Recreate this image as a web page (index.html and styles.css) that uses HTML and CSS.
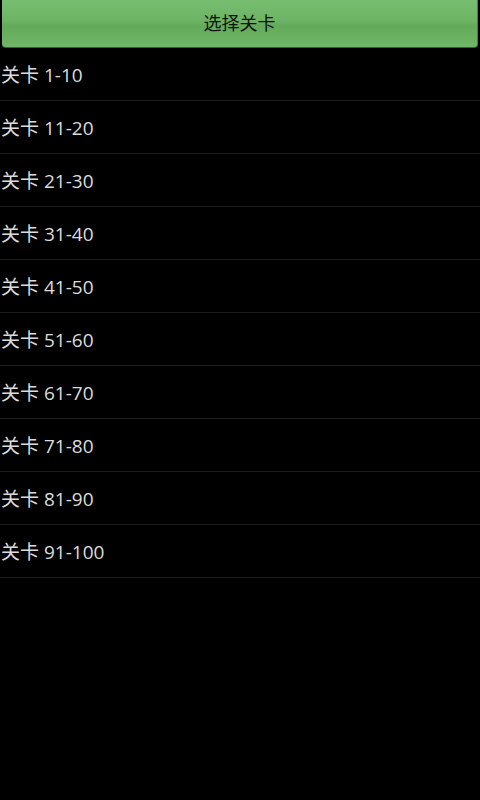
FILE: index.html
```html
<!DOCTYPE html>
<html>
<head>
<meta charset="utf-8">
<link rel="stylesheet" href="styles.css">
</head>
<body>
<div class="header">
  <div class="btn">选择关卡</div>
</div>
<ul class="list">
  <li>关卡 1-10</li>
  <li>关卡 11-20</li>
  <li>关卡 21-30</li>
  <li>关卡 31-40</li>
  <li>关卡 41-50</li>
  <li>关卡 51-60</li>
  <li>关卡 61-70</li>
  <li>关卡 71-80</li>
  <li>关卡 81-90</li>
  <li>关卡 91-100</li>
</ul>
</body>
</html>
```
FILE: styles.css
```css
html, body {
  margin: 0;
  padding: 0;
  background: #000;
  height: 100%;
}
body {
  font-family: "Open Sans", "Noto Sans CJK SC", sans-serif;
}
.header {
  padding: 0 2px;
}
.btn {
  height: 47px;
  line-height: 46px;
  text-align: center;
  font-size: 18px;
  color: #111;
  background: linear-gradient(#77bd70, #6cb464 45%, #63aa5a 55%, #6fb867);
  border-radius: 0 0 4px 4px;
  border-right: 1px solid #4a7a45;
  border-bottom: 1px solid #3c5c39;
}
.list {
  list-style: none;
  margin: 0;
  padding: 0;
}
.list li {
  height: 52px;
  line-height: 54px;
  padding-left: 1px;
  font-size: 19px;
  color: #dcdcdc;
  border-bottom: 1px solid #1c1c1c;
}
```
